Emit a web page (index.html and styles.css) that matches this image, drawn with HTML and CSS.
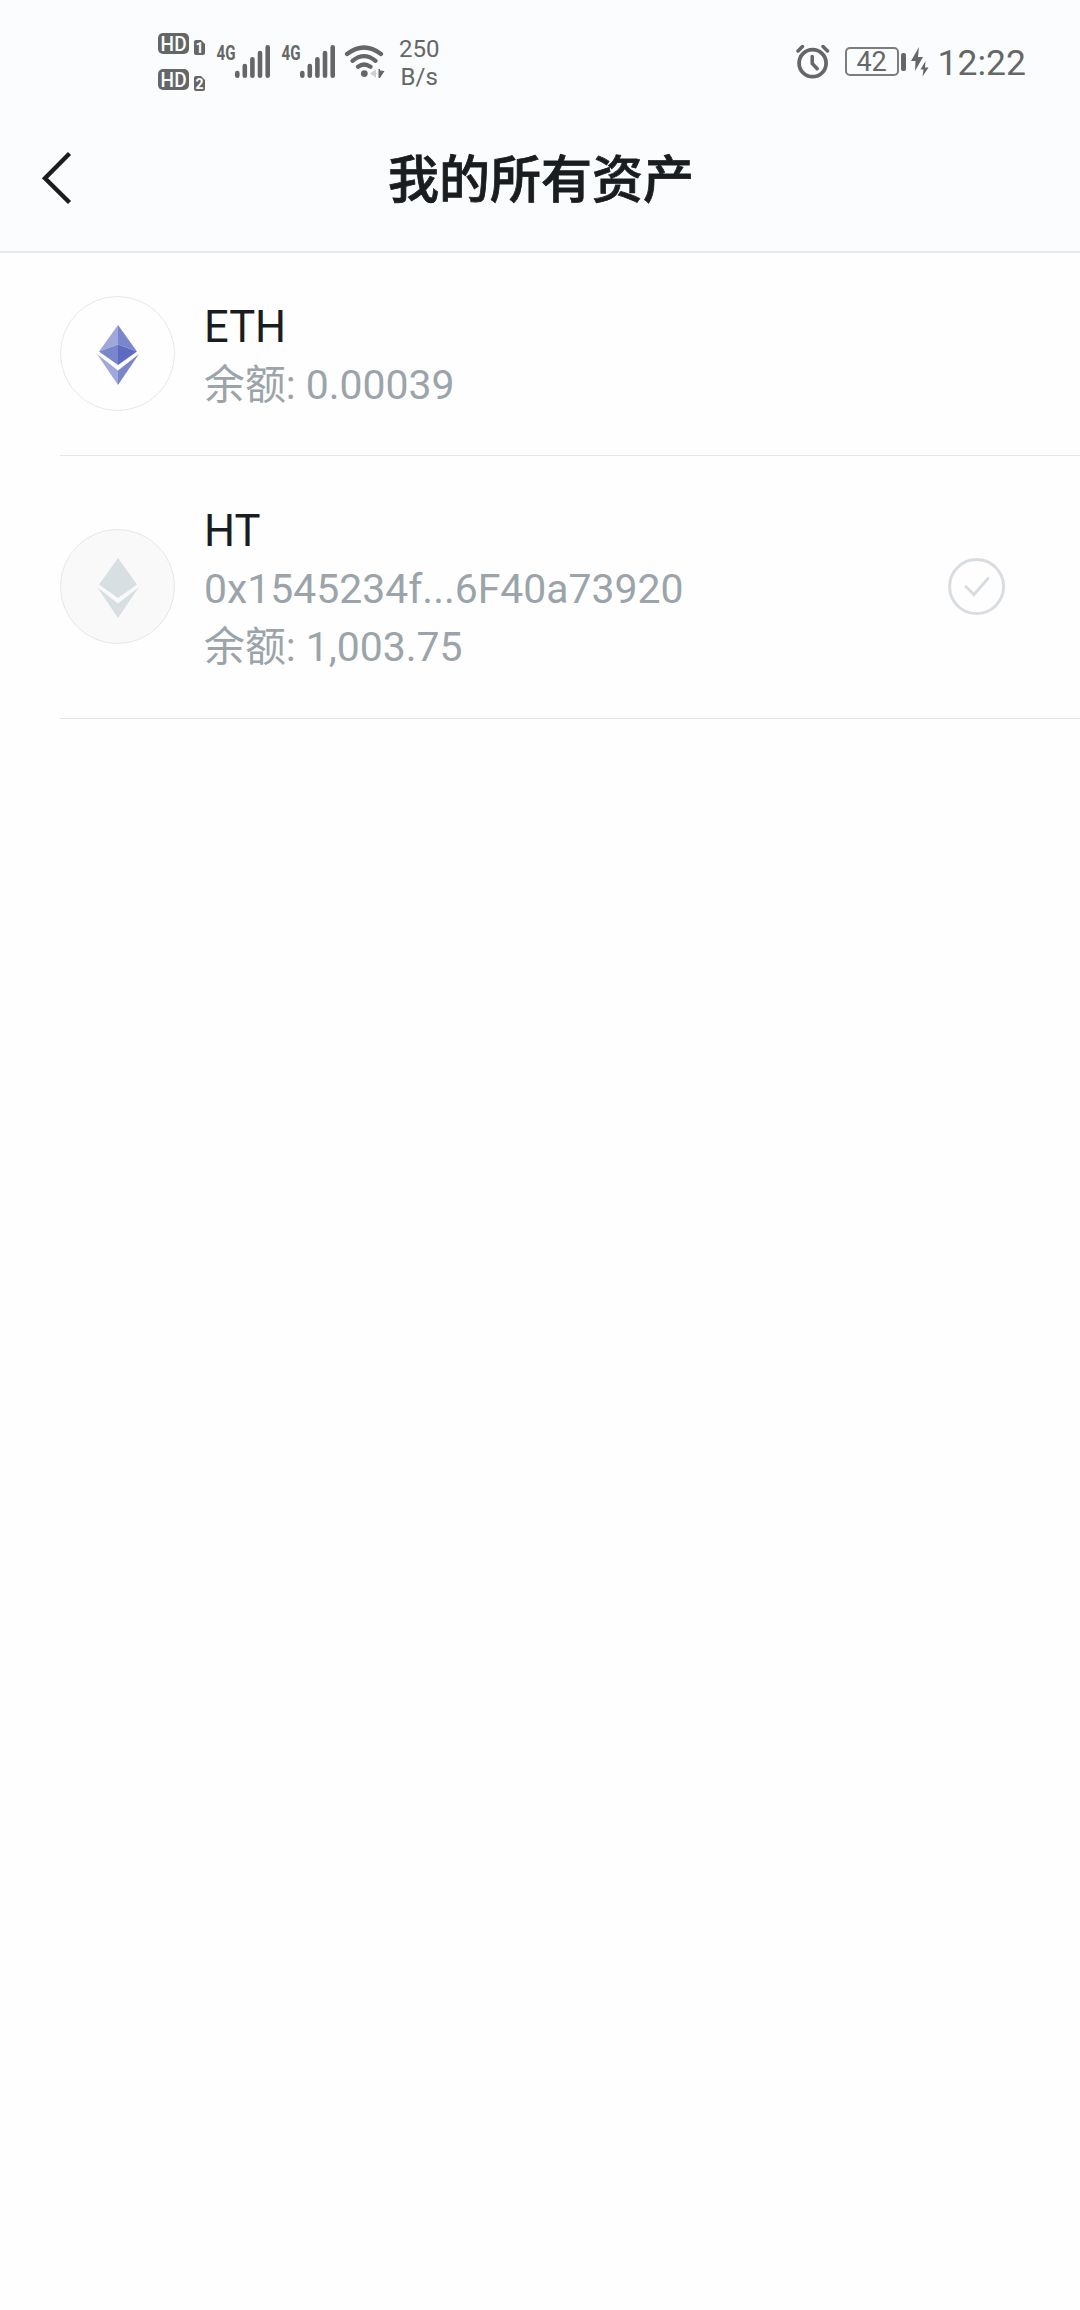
FILE: index.html
```html
<!DOCTYPE html>
<html lang="zh-CN">
<head>
<meta charset="utf-8">
<title>我的所有资产</title>
<link rel="stylesheet" href="styles.css">
</head>
<body>
<header class="top">
  <div class="status">
    <div class="status-left">
      <svg class="hd" viewBox="0 0 48 60">
        <rect x="0" y="1" width="31" height="21" rx="5" fill="currentColor"/>
        <text class="hd-label" x="2.600" y="18.800" textLength="26" lengthAdjust="spacingAndGlyphs">HD</text>
        <path d="M36 10q0-2 2-2h5l4 4v9q0 2-2 2h-7q-2 0-2-2z" fill="currentColor"/>
        <text class="sim-label" x="41.500" y="20.800">1</text>
        <rect x="0" y="37" width="31" height="21" rx="5" fill="currentColor"/>
        <text class="hd-label" x="2.600" y="54.800" textLength="26" lengthAdjust="spacingAndGlyphs">HD</text>
        <path d="M36 46q0-2 2-2h5l4 4v9q0 2-2 2h-7q-2 0-2-2z" fill="currentColor"/>
        <text class="sim-label" x="41.500" y="56.800">2</text>
      </svg>
      <svg class="signal" viewBox="0 -6 56 44">
        <text class="net-label" x="0.500" y="17" textLength="19" lengthAdjust="spacingAndGlyphs">4G</text>
        <path d="M21.300 30v2.700M28.800 23v9.700M36.400 16.300v16.400M44 10v22.700M51.700 4.300v28.400" stroke="currentColor" stroke-width="4.600" stroke-linecap="round"/>
      </svg>
      <svg class="signal" viewBox="0 -6 56 44">
        <text class="net-label" x="0.500" y="17" textLength="19" lengthAdjust="spacingAndGlyphs">4G</text>
        <path d="M21.300 30v2.700M28.800 23v9.700M36.400 16.300v16.400M44 10v22.700M51.700 4.300v28.400" stroke="currentColor" stroke-width="4.600" stroke-linecap="round"/>
      </svg>
      <svg class="wifi" viewBox="0 0 42 34" fill="none" stroke="currentColor" stroke-width="4.200" stroke-linecap="round">
        <path d="M3 9Q20-4 37 9M8.500 15.800Q20 6.500 31.500 15.800M14 21.700Q20 17.300 26.500 21.700"/>
        <circle cx="20.300" cy="28.600" r="3.400" fill="currentColor" stroke="none"/>
        <path d="M32 24.300v8.500l-6-4.300z" fill="#d0d2d2" stroke="none"/>
        <path d="M34.500 24l1.500 0v1.500l4.500.5-4.500 7h-1.500z" fill="currentColor" stroke="none"/>
      </svg>
      <div class="speed">250<br>B/s</div>
    </div>
    <div class="status-right">
      <svg class="alarm" viewBox="0 0 34 36" fill="none" stroke="currentColor" stroke-linecap="round">
        <circle cx="16.600" cy="19.200" r="13.500" stroke-width="3.800"/>
        <path d="M16.200 12.500v7l5 5.200" stroke-width="3.500" stroke-linejoin="round"/>
        <path d="M2 7l4.500-4.500M27 2.500L31.500 7" stroke-width="3.500"/>
      </svg>
      <div class="battery"><span class="level">42</span><span class="cap"></span></div>
      <svg class="bolt" viewBox="0 0 18 30" fill="currentColor">
        <path d="M8 0L0 14h4.500L4 24l8-14H7z"/>
        <path d="M14.500 14L9.500 22.500h3L11.500 29.500 17.500 20.500H14z"/>
      </svg>
      <span class="clock">12:22</span>
    </div>
  </div>
  <div class="nav">
    <svg class="back" viewBox="0 0 32 56"><path d="M28.500 3.500L4 28.300 28.500 52.500" fill="none" stroke="currentColor" stroke-width="4.400"/></svg>
    <h1 class="title">我的所有资产</h1>
  </div>
</header>
<main class="list">
  <section class="asset">
    <div class="coin">
      <svg class="eth" viewBox="0 0 42 60">
        <path d="M21 0L2 26.500 21 19.500z" fill="#9fa8da"/>
        <path d="M21 0L40 26.500 21 19.500z" fill="#7986cb"/>
        <path d="M2 26.500L21 19.500V40z" fill="#7986cb"/>
        <path d="M40 26.500L21 19.500V40z" fill="#5c6bc0"/>
        <path d="M0 29L21 45.500V60z" fill="#9fa8da"/>
        <path d="M42 29L21 45.500V60z" fill="#7986cb"/>
      </svg>
    </div>
    <div class="info">
      <div class="name">ETH</div>
      <div class="detail">余额: 0.00039</div>
    </div>
  </section>
  <section class="asset asset-token">
    <div class="coin coin-muted">
      <svg class="eth" viewBox="0 0 42 60" fill="#d8dfe3">
        <path d="M21 0L2 26.500 21 40 40 26.500z"/>
        <path d="M0 29L21 45.500 42 29 21 60z"/>
      </svg>
    </div>
    <div class="info">
      <div class="name">HT</div>
      <div class="detail">0x1545234f...6F40a73920</div>
      <div class="detail">余额: 1,003.75</div>
    </div>
    <svg class="check" viewBox="0 0 58 58" fill="none" stroke="#d9dde2">
      <circle cx="28.600" cy="28.600" r="27" stroke-width="3"/>
      <path d="M18 28.700l8 7.800 14-16" stroke-width="3" stroke-linecap="round"/>
    </svg>
  </section>
</main>
</body>
</html>
```
FILE: styles.css
```css
* { box-sizing: border-box; }
body {
  margin: 0;
  min-height: 2310px;
  background: #fefefe;
  font-family: Roboto, "Noto Sans CJK SC", sans-serif;
  color: #1a1d1f;
}
svg { display: block; flex: none; }
.top {
  height: 253px;
  background: #fbfcfe;
  border-bottom: 2px solid #e6e8ea;
}
.status {
  height: 105px;
  padding: 0 54px 0 158px;
  display: flex;
  justify-content: space-between;
  color: #656766;
}
.status-left, .status-right { display: flex; align-items: flex-start; }
.hd { width: 48px; height: 60px; margin: 32px 10px 0 0; }
.hd-label { font: 500 20px Roboto, sans-serif; fill: #fbfcfe; }
.sim-label { font: 700 14px Roboto, sans-serif; fill: #fbfcfe; text-anchor: middle; }
.signal { width: 56px; height: 44px; margin: 37px 9px 0 0; }
.net-label { font: 700 20px Roboto, sans-serif; fill: currentColor; }
.wifi { width: 42px; height: 34px; margin: 45px 13px 0 -2px; }
.speed { margin-top: 35px; font-size: 24px; line-height: 28px; text-align: center; }
.alarm { width: 34px; height: 36px; margin: 44px 15px 0 0; }
.battery { display: flex; align-items: center; margin: 47px 5px 0 0; gap: 2px; }
.level {
  width: 54px;
  height: 29px;
  border: 2px solid #7c7e7d;
  border-radius: 5px;
  font-size: 27px;
  line-height: 27px;
  text-align: center;
}
.cap { width: 5px; height: 18px; border-radius: 2px; background: #656766; }
.bolt { width: 18px; height: 30px; margin: 47px 9px 0 0; }
.clock { margin-top: 42px; font-size: 35.5px; line-height: 42px; }
.nav {
  height: 146px;
  padding: 0 40px;
  display: grid;
  grid-template-columns: 50px 1fr 50px;
  align-items: center;
}
.back { width: 32px; height: 56px; margin-left: 1px; color: #1a1d1f; }
.title {
  margin: 0 0 4px 2px;
  text-align: center;
  font: 500 51px/72px "Noto Sans CJK SC", sans-serif;
  -webkit-text-stroke: 0.8px currentColor;
}
.asset {
  height: 203px;
  margin-left: 60px;
  padding-right: 74px;
  border-bottom: 1px solid #e4e6e7;
  display: flex;
  align-items: center;
}
.asset-token { height: 263px; }
.coin {
  width: 115px;
  height: 115px;
  margin-bottom: 2px;
  flex: none;
  border: 1px solid #e5e8e9;
  border-radius: 50%;
  display: flex;
  align-items: center;
  justify-content: center;
}
.coin-muted { background: #f9f9f9; }
.eth { width: 42px; height: 60px; margin: 3px 0 0 1px; }
.info { flex: 1; margin-left: 29px; padding-top: 4px; }
.name { font-size: 43.5px; line-height: 58px; }
.detail { font-size: 40.9px; line-height: 58px; color: #9aa4aa; }
.name + .detail { margin-top: -1px; }
.check { width: 58px; height: 58px; }
```
